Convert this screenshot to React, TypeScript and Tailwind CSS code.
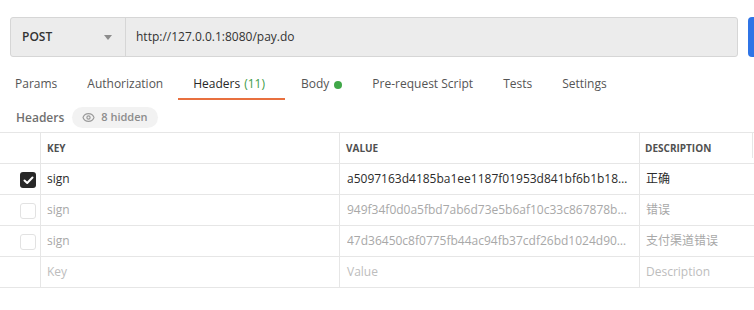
import React from "react";
import { Eye } from "lucide-react";

const font = { fontFamily: "'Open Sans', 'Noto Sans CJK SC', sans-serif" };

function Checkbox({ checked }: { checked: boolean }) {
  if (checked) {
    return (
      <div className="w-[16px] h-[16px] rounded-[3px] bg-[#282828] flex items-center justify-center">
        <svg width="11" height="9" viewBox="0 0 11 9" fill="none">
          <path d="M1.5 4.5 L4.2 7 L9.5 1.5" stroke="white" strokeWidth="2" strokeLinecap="round" strokeLinejoin="round" />
        </svg>
      </div>
    );
  }
  return <div className="w-[16px] h-[16px] rounded-[3px] border border-[#e2e2e2] bg-white" />;
}

type Row = { checked: boolean; key: string; value: string; desc: string; dim: boolean };

const rows: Row[] = [
  { checked: true, key: "sign", value: "a5097163d4185ba1ee1187f01953d841bf6b1b18a7c2", desc: "正确", dim: false },
  { checked: false, key: "sign", value: "949f34f0d0a5fbd7ab6d73e5b6af10c33c867878b2a1", desc: "错误", dim: true },
  { checked: false, key: "sign", value: "47d36450c8f0775fb44ac94fb37cdf26bd1024d903e5", desc: "支付渠道错误", dim: true },
];

export default function App() {
  const tabs = ["Params", "Authorization"];
  return (
    <div className="w-[754px] h-[310px] bg-white overflow-hidden text-[12px]" style={font}>
      <div className="pt-[17px] pl-[10px] flex gap-[10px]">
        <div className="w-[728px] h-[40px] flex bg-[#ececec] border border-[#d6d6d6] rounded-[3px]">
          <div className="w-[115px] flex items-center border-r border-[#d6d6d6] pl-[11px] pr-[13px] justify-between">
            <span className="font-semibold text-[#333]">POST</span>
            <svg width="8" height="5" viewBox="0 0 8 5">
              <path d="M0 0 L8 0 L4 5 Z" fill="#8c8c8c" />
            </svg>
          </div>
          <div className="flex items-center pl-[10px] text-[#333]">http://127.0.0.1:8080/pay.do</div>
        </div>
        <div className="flex-1 h-[40px] bg-[#2f74e6] rounded-l-[4px]" />
      </div>

      <div className="mt-[13px] flex h-[30px] text-[#555]">
        {tabs.map((t) => (
          <div key={t} className="px-[15px] flex items-center border-b-2 border-transparent">{t}</div>
        ))}
        <div className="pl-[15px] pr-[20px] flex items-center border-b-2 border-[#e8703f] text-[#282828]">
          Headers<span className="ml-[4px] text-[#3d9b46]">(11)</span>
        </div>
        <div className="pl-[16px] pr-[15px] flex items-center border-b-2 border-transparent">
          Body<span className="ml-[5px] w-[8px] h-[8px] rounded-full bg-[#40a748] inline-block mt-[1px]" />
        </div>
        <div className="px-[15px] flex items-center border-b-2 border-transparent">Pre-request Script</div>
        <div className="px-[15px] flex items-center border-b-2 border-transparent">Tests</div>
        <div className="px-[15px] flex items-center border-b-2 border-transparent">Settings</div>
      </div>

      <div className="mt-[7px] ml-[16px] flex items-center h-[21px]">
        <span className="font-semibold text-[#707070]">Headers</span>
        <div className="ml-[8px] h-[21px] px-[10px] rounded-full bg-[#f2f2f2] flex items-center gap-[6px] text-[#8c8c8c] text-[11px] font-semibold">
          <Eye size={13} strokeWidth={2.2} color="#9a9a9a" />
          <span>8 hidden</span>
        </div>
      </div>

      <div className="mt-[4px] border-t border-[#e6e6e6]">
        <div className="flex h-[31px] border-b border-[#e6e6e6] text-[10px] font-bold text-[#505050]">
          <div className="w-[40px]" />
          <div className="w-[299px] border-l border-[#e6e6e6] pl-[6px] flex items-center">KEY</div>
          <div className="w-[300px] border-l border-[#e6e6e6] pl-[6px] flex items-center">VALUE</div>
          <div className="w-[113px] border-l border-[#e6e6e6] pl-[5px] flex items-center">DESCRIPTION</div>
          <div className="flex-1 flex items-start">
            <div className="h-[25px] border-l border-[#e6e6e6]" />
          </div>
        </div>
        {rows.map((r, i) => (
          <div key={i} className={`flex h-[31px] border-b border-[#e6e6e6] ${r.dim ? "text-[#a8a8a8]" : "text-[#2b2b2b]"}`}>
            <div className="w-[40px] flex items-center justify-end pr-[4px] pt-[2px]">
              <Checkbox checked={r.checked} />
            </div>
            <div className="w-[299px] border-l border-[#e6e6e6] pl-[6px] flex items-center">{r.key}</div>
            <div className="w-[300px] border-l border-[#e6e6e6] px-[7px] flex items-center min-w-0">
              <span className="block truncate">{r.value}</span>
            </div>
            <div className="flex-1 border-l border-[#e6e6e6] pl-[6px] flex items-center">{r.desc}</div>
          </div>
        ))}
        <div className="flex h-[31px] border-b border-[#e6e6e6] text-[#bdbdbd]">
          <div className="w-[40px]" />
          <div className="w-[299px] border-l border-[#e6e6e6] pl-[6px] flex items-center">Key</div>
          <div className="w-[300px] border-l border-[#e6e6e6] pl-[7px] flex items-center">Value</div>
          <div className="flex-1 border-l border-[#e6e6e6] pl-[6px] flex items-center">Description</div>
        </div>
      </div>
    </div>
  );
}
